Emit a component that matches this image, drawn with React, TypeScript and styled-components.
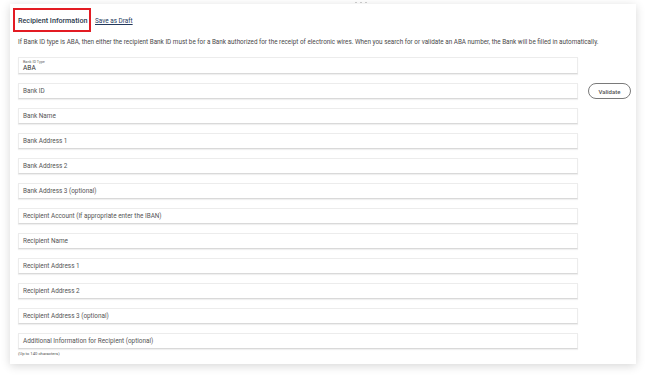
import React from "react";
import styled, { createGlobalStyle } from "styled-components";

const GlobalStyle = createGlobalStyle`
  html, body {
    margin: 0;
    padding: 0;
    background: #ffffff;
  }
  body {
    font-family: Roboto, "Liberation Sans", sans-serif;
  }
`;

const Page = styled.div`
  width: 646px;
  height: 380px;
  padding: 4px 10px 0 10px;
  box-sizing: border-box;
  position: relative;
`;

const Card = styled.div`
  position: relative;
  width: 626px;
  height: 360px;
  background: #ffffff;
  box-shadow: 0 2px 9px rgba(0, 0, 0, 0.16);
  padding: 4px 8px 0 8px;
  box-sizing: border-box;
`;

const Handle = styled.div`
  position: absolute;
  top: -2px;
  left: 345px;
  display: flex;
  gap: 3px;
  span {
    width: 2px;
    height: 1px;
    background: #c8c8c8;
  }
`;

const Header = styled.div`
  display: flex;
  align-items: center;
  height: 24px;
`;

const TitleBox = styled.div`
  margin-left: -5px;
  height: 24px;
  width: 78px;
  box-sizing: border-box;
  border: 2px solid #e31b23;
  padding: 0 3px;
  display: flex;
  align-items: center;
  font-size: 7.2px;
  font-weight: 500;
  color: #2c3a4c;
  white-space: nowrap;
`;

const DraftLink = styled.a`
  margin-left: 4px;
  margin-top: 1px;
  font-size: 6.4px;
  color: #23395d;
  text-decoration: underline;
  white-space: nowrap;
`;

const Note = styled.p`
  margin: 5px 0 0 0;
  font-size: 6.35px;
  color: #4a4a4a;
  line-height: 10px;
  white-space: nowrap;
`;

const Form = styled.div`
  margin-top: 10px;
  display: flex;
  flex-direction: column;
  gap: 9px;
`;

const Row = styled.div`
  display: flex;
  align-items: center;
`;

const Field = styled.div<{ $tall?: boolean }>`
  width: 560px;
  height: ${({ $tall }) => ($tall ? "17px" : "16px")};
  flex: none;
  box-sizing: border-box;
  border: 1px solid #ececec;
  border-bottom: 1px solid #d9d9d9;
  box-shadow: 0 1px 1px rgba(0, 0, 0, 0.06);
  background: #ffffff;
  padding: 0 4px;
  display: flex;
  flex-direction: column;
  justify-content: center;
  font-size: 6.4px;
  color: #555555;
`;

const SmallLabel = styled.span`
  font-size: 3.8px;
  color: #666666;
  line-height: 5px;
`;

const Value = styled.span`
  font-size: 6.6px;
  color: #333333;
  line-height: 8px;
`;

const ValidateButton = styled.button`
  margin-left: 10px;
  width: 43px;
  height: 16px;
  flex: none;
  border: 1px solid #7a7a7a;
  border-radius: 9px;
  background: #ffffff;
  font-family: Roboto, "Liberation Sans", sans-serif;
  font-size: 6px;
  font-weight: 500;
  color: #555555;
  padding: 0;
`;

const Hint = styled.div`
  margin-top: 2px;
  font-size: 4.2px;
  color: #555555;
`;

const fields = [
  "Bank Name",
  "Bank Address 1",
  "Bank Address 2",
  "Bank Address 3 (optional)",
  "Recipient Account (If appropriate enter the IBAN)",
  "Recipient Name",
  "Recipient Address 1",
  "Recipient Address 2",
  "Recipient Address 3 (optional)",
  "Additional Information for Recipient (optional)",
];

export default function App() {
  return (
    <>
      <GlobalStyle />
      <Page>
        <Card>
          <Handle>
            <span />
            <span />
            <span />
          </Handle>
          <Header>
            <TitleBox>Recipient Information</TitleBox>
            <DraftLink>Save as Draft</DraftLink>
          </Header>
          <Note>
            If Bank ID type is ABA, then either the recipient Bank ID must be for a Bank authorized for the
            receipt of electronic wires. When you search for or validate an ABA number, the Bank will be filled in
            automatically.
          </Note>
          <Form>
            <Row>
              <Field $tall>
                <SmallLabel>Bank ID Type</SmallLabel>
                <Value>ABA</Value>
              </Field>
            </Row>
            <Row>
              <Field>Bank ID</Field>
              <ValidateButton>Validate</ValidateButton>
            </Row>
            {fields.map((f) => (
              <Row key={f}>
                <Field>{f}</Field>
              </Row>
            ))}
          </Form>
          <Hint>(Up to 140 characters)</Hint>
        </Card>
      </Page>
    </>
  );
}
